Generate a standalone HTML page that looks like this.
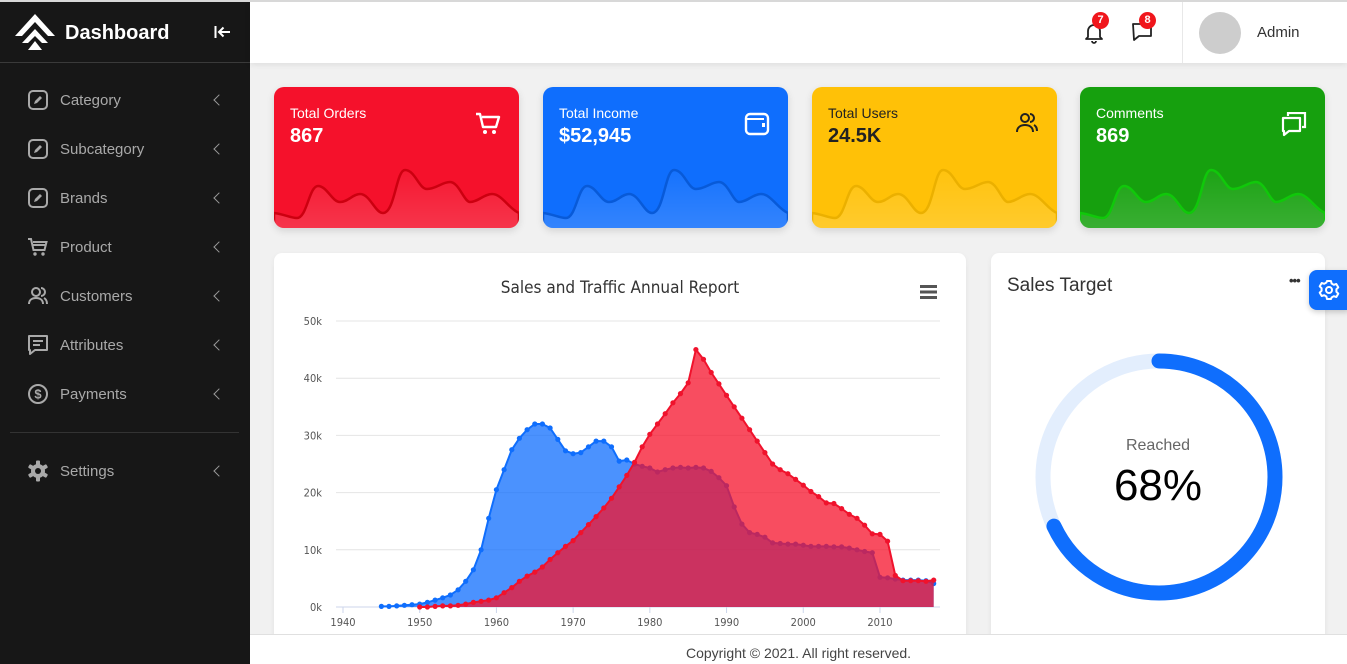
<!DOCTYPE html>
<html><head><meta charset="utf-8"><style>
*{box-sizing:border-box;margin:0;padding:0}
body{width:1347px;height:664px;overflow:hidden;background:#f1f1f1;font-family:"Liberation Sans",sans-serif;position:relative}
.topline{position:absolute;left:0;top:0;width:1347px;height:2px;background:#d8d8d8;z-index:5}
.side{position:absolute;left:0;top:2px;width:250px;height:662px;background:#171717}
.logo{position:absolute;left:0;top:0;width:250px;height:61px;border-bottom:1px solid #3a3a3a}
.logo .t{position:absolute;left:65px;top:20px;color:#fff;font-size:20px;font-weight:bold}
.item{position:absolute;left:0;width:250px;height:30px;color:#a9a9a9;font-size:15px}
.item svg{position:absolute;left:27px;top:4px}
.item span{position:absolute;left:60px;top:7px}
.item i{position:absolute;left:215px;top:11px;width:8px;height:8px;border-left:1.3px solid #9a9a9a;border-bottom:1.3px solid #9a9a9a;transform:rotate(45deg)}
.hdr{position:absolute;left:250px;top:2px;width:1097px;height:61px;background:#fff;box-shadow:0 2px 6px rgba(0,0,0,.08)}
.badge{position:absolute;width:17px;height:17px;border-radius:50%;background:#f0161c;color:#fff;font-size:11px;font-weight:bold;text-align:center;line-height:17px}
.card{position:absolute;top:87px;width:245px;height:141px;border-radius:10px;overflow:hidden;box-shadow:0 3px 8px rgba(0,0,0,.12)}
.card .l{position:absolute;left:16px;top:18px;font-size:14px}
.card .v{position:absolute;left:16px;top:38px;font-size:20px;font-weight:bold}
.card svg.s{position:absolute;left:0;top:0}
.card svg.ic{position:absolute;right:18px;top:25px}
.panel{position:absolute;background:#fff;border-radius:8px;box-shadow:0 2px 6px rgba(0,0,0,.06)}
.foot{position:absolute;left:250px;top:634px;width:1097px;height:30px;background:#fff;border-top:1px solid #e0e0e0;text-align:center;font-size:14px;color:#444;padding-top:10px;padding-left:0}
</style></head><body>
<div class="topline"></div>
<div class="side">
 <div class="logo">
  <svg style="position:absolute;left:15px;top:11px" width="40" height="38" viewBox="0 0 40 38"><path d="M20 1 L40 23 L33 23 L20 9 L7 23 L0 23Z" fill="#fff"/><path d="M20 16 L33 30 L27 30 L20 23 L13 30 L7 30Z" fill="#fff"/><path d="M20 28 L27 37 L13 37Z" fill="#fff"/></svg>
  <div class="t">Dashboard</div>
  <svg style="position:absolute;left:214px;top:23px" width="18" height="14" viewBox="0 0 18 14"><path d="M1.5 1v12M16 7H5M9.5 2.5L5 7l4.5 4.5" stroke="#fff" stroke-width="2" fill="none"/></svg>
 </div>
 <div class="item" style="top:83px"><svg width="22" height="22" viewBox="0 0 22 22"><rect x="2" y="2" width="18" height="18" rx="4" stroke="#a9a9a9" stroke-width="2" fill="none"/><path d="M7 15l1-3 5-5 2 2-5 5z" fill="#a9a9a9"/></svg><span>Category</span><i></i></div>
 <div class="item" style="top:132px"><svg width="22" height="22" viewBox="0 0 22 22"><rect x="2" y="2" width="18" height="18" rx="4" stroke="#a9a9a9" stroke-width="2" fill="none"/><path d="M7 15l1-3 5-5 2 2-5 5z" fill="#a9a9a9"/></svg><span>Subcategory</span><i></i></div>
 <div class="item" style="top:181px"><svg width="22" height="22" viewBox="0 0 22 22"><rect x="2" y="2" width="18" height="18" rx="4" stroke="#a9a9a9" stroke-width="2" fill="none"/><path d="M7 15l1-3 5-5 2 2-5 5z" fill="#a9a9a9"/></svg><span>Brands</span><i></i></div>
 <div class="item" style="top:230px"><svg width="22" height="22" viewBox="0 0 22 22"><path d="M1 3h3l2.5 11h11l2-8H6" stroke="#a9a9a9" stroke-width="2" fill="none"/><path d="M6 9h13" stroke="#a9a9a9" stroke-width="2"/><circle cx="8" cy="18" r="1.7" fill="#a9a9a9"/><circle cx="16" cy="18" r="1.7" fill="#a9a9a9"/></svg><span>Product</span><i></i></div>
 <div class="item" style="top:279px"><svg width="22" height="22" viewBox="0 0 22 22"><circle cx="9" cy="7" r="4" stroke="#a9a9a9" stroke-width="2" fill="none"/><path d="M2 19c0-4 3-6 7-6s7 2 7 6M14 3a4 4 0 0 1 0 8M17 13c2 1 3 3 3 6" stroke="#a9a9a9" stroke-width="2" fill="none"/></svg><span>Customers</span><i></i></div>
 <div class="item" style="top:328px"><svg width="22" height="22" viewBox="0 0 22 22"><path d="M2 2h18v14H8l-5 4v-4H2z" stroke="#a9a9a9" stroke-width="2" fill="none" stroke-linejoin="round"/><path d="M6 7h10M6 11h7" stroke="#a9a9a9" stroke-width="2"/></svg><span>Attributes</span><i></i></div>
 <div class="item" style="top:377px"><svg width="22" height="22" viewBox="0 0 22 22"><circle cx="11" cy="11" r="9" stroke="#a9a9a9" stroke-width="2" fill="none"/><text x="11" y="15.5" text-anchor="middle" font-size="13" font-weight="bold" fill="#a9a9a9" font-family="Liberation Sans">$</text></svg><span>Payments</span><i></i></div>
 <div style="position:absolute;left:10px;top:430px;width:229px;height:1px;background:#333"></div>
 <div class="item" style="top:454px"><svg width="22" height="22" viewBox="0 0 22 22"><g fill="#a9a9a9"><circle cx="11" cy="11" r="7"/><rect x="9" y="0.5" width="4" height="21" rx="1"/><rect x="9" y="0.5" width="4" height="21" rx="1" transform="rotate(60 11 11)"/><rect x="9" y="0.5" width="4" height="21" rx="1" transform="rotate(120 11 11)"/></g><circle cx="11" cy="11" r="3" fill="#171717"/></svg><span>Settings</span><i></i></div>
</div>

<div class="hdr">
 <svg style="position:absolute;left:834px;top:20px" width="20" height="22" viewBox="0 0 20 22"><path d="M4 15V9a6 6 0 0 1 12 0v6l2 2H2z" stroke="#222" stroke-width="1.8" fill="none" stroke-linejoin="round"/><path d="M8 19a2 2 0 0 0 4 0" stroke="#222" stroke-width="1.8" fill="none"/></svg>
 <div class="badge" style="left:842px;top:10px">7</div>
 <svg style="position:absolute;left:881px;top:20px" width="22" height="20" viewBox="0 0 22 20"><path d="M2 2h18v12H8l-5 4z" stroke="#222" stroke-width="1.8" fill="none" stroke-linejoin="round"/></svg>
 <div class="badge" style="left:889px;top:10px">8</div>
 <div style="position:absolute;left:932px;top:0;width:1px;height:61px;background:#e8e8e8"></div>
 <div style="position:absolute;left:949px;top:10px;width:42px;height:42px;border-radius:50%;background:#cdcdcd"></div>
 <div style="position:absolute;left:1007px;top:22px;font-size:15px;color:#333">Admin</div>
</div>

<svg width="0" height="0" style="position:absolute"><defs><linearGradient id="g1" x1="0" y1="0" x2="0" y2="1"><stop offset="0" stop-color="#fff" stop-opacity=".03"/><stop offset="1" stop-color="#fff" stop-opacity=".16"/></linearGradient></defs></svg>

<div class="card" style="left:274px;background:#f5112b;color:#fff">
 <svg class="s" width="245" height="141"><path d="M0 126 C10 127 16 131 23 131 C33 131 35 99 44 99 C53 99 58 115 66 115 C74 115 79 107 86 107 C96 107 101 126 109 126 C121 126 122 83 131 83 C141 83 145 102 153 102 C162 102 168 95 176 95 C185 95 190 115 196 115 C204 115 210 107 218 107 C228 107 235 122 245 126 L245 145 L0 145Z" fill="url(#g1)" stroke="#cc0010" stroke-width="2.5"/></svg>
 <div class="l">Total Orders</div><div class="v">867</div>
 <svg class="ic" width="26" height="24" viewBox="0 0 26 24"><path d="M1 2h4l3 13h13l3-10H7" stroke="#fff" stroke-width="2.4" fill="none" stroke-linejoin="round"/><circle cx="10" cy="20" r="2" fill="#fff"/><circle cx="19" cy="20" r="2" fill="#fff"/></svg>
</div>
<div class="card" style="left:543px;background:#0f6efd;color:#fff">
 <svg class="s" width="245" height="141"><path d="M0 126 C10 127 16 131 23 131 C33 131 35 99 44 99 C53 99 58 115 66 115 C74 115 79 107 86 107 C96 107 101 126 109 126 C121 126 122 83 131 83 C141 83 145 102 153 102 C162 102 168 95 176 95 C185 95 190 115 196 115 C204 115 210 107 218 107 C228 107 235 122 245 126 L245 145 L0 145Z" fill="url(#g1)" stroke="#085ad8" stroke-width="2.5"/></svg>
 <div class="l">Total Income</div><div class="v">$52,945</div>
 <svg class="ic" width="26" height="24" viewBox="0 0 26 24"><rect x="2" y="2" width="22" height="20" rx="4" stroke="#fff" stroke-width="2.4" fill="none"/><path d="M2 7h18" stroke="#fff" stroke-width="2"/><rect x="18" y="11" width="3" height="4" fill="#fff"/></svg>
</div>
<div class="card" style="left:812px;background:#ffc107;color:#222">
 <svg class="s" width="245" height="141"><path d="M0 126 C10 127 16 131 23 131 C33 131 35 99 44 99 C53 99 58 115 66 115 C74 115 79 107 86 107 C96 107 101 126 109 126 C121 126 122 83 131 83 C141 83 145 102 153 102 C162 102 168 95 176 95 C185 95 190 115 196 115 C204 115 210 107 218 107 C228 107 235 122 245 126 L245 145 L0 145Z" fill="url(#g1)" stroke="#ebb000" stroke-width="2.5"/></svg>
 <div class="l">Total Users</div><div class="v">24.5K</div>
 <svg class="ic" width="24" height="22" viewBox="0 0 24 22"><circle cx="10" cy="6" r="4" stroke="#222" stroke-width="2" fill="none"/><path d="M2 20c0-5 4-7 8-7s8 2 8 7M15 2a4 4 0 0 1 0 8M19 13c2 1 3 3 3 6" stroke="#222" stroke-width="2" fill="none"/></svg>
</div>
<div class="card" style="left:1080px;background:#16a00e;color:#fff">
 <svg class="s" width="245" height="141"><path d="M0 126 C10 127 16 131 23 131 C33 131 35 99 44 99 C53 99 58 115 66 115 C74 115 79 107 86 107 C96 107 101 126 109 126 C121 126 122 83 131 83 C141 83 145 102 153 102 C162 102 168 95 176 95 C185 95 190 115 196 115 C204 115 210 107 218 107 C228 107 235 122 245 126 L245 145 L0 145Z" fill="url(#g1)" stroke="#10c80a" stroke-width="2.5"/></svg>
 <div class="l">Comments</div><div class="v">869</div>
 <svg class="ic" width="26" height="26" viewBox="0 0 26 26"><path d="M7 4V1h17v14h-3" stroke="#fff" stroke-width="2.2" fill="none"/><path d="M2 6h17v13H8l-5 4V19H2z" stroke="#fff" stroke-width="2.2" fill="none" stroke-linejoin="round"/></svg>
</div>

<div class="panel" style="left:274px;top:253px;width:692px;height:400px">
 <svg width="692" height="400" style="position:absolute;left:0;top:0" id="ch"></svg>
</div>
<div class="panel" style="left:991px;top:253px;width:334px;height:400px">
 <div style="position:absolute;left:16px;top:22px;font-size:19px;color:#333">Sales Target</div>
 <div style="position:absolute;left:298px;top:20px;font-size:13px;font-weight:bold;color:#333;letter-spacing:-1px">•••</div>
 <svg width="334" height="400" style="position:absolute;left:0;top:0"><circle cx="168" cy="224" r="116" stroke="#e3eefd" stroke-width="15" fill="none"/><circle cx="168" cy="224" r="116" stroke="#0f6efd" stroke-width="15" fill="none" stroke-linecap="round" stroke-dasharray="495.6 1000" transform="rotate(-90 168 224)"/></svg>
 <div style="position:absolute;left:0;width:334px;top:184px;text-align:center;font-size:16px;color:#666">Reached</div>
 <div style="position:absolute;left:0;width:334px;top:208px;text-align:center;font-size:44px;color:#000">68%</div>
</div>
<div style="position:absolute;left:1309px;top:270px;width:40px;height:40px;background:#0f6efd;border-radius:8px 0 0 8px;box-shadow:0 2px 6px rgba(0,0,0,.2)">
 <svg style="position:absolute;left:9px;top:9px" width="22" height="22" viewBox="0 0 22 22"><g fill="none" stroke="#fff" stroke-width="2"><path d="M9 2h4l.6 2.5 2.2 1.3 2.5-.8 2 3.4-1.9 1.8v2.6l1.9 1.8-2 3.4-2.5-.8-2.2 1.3L13 20H9l-.6-2.5-2.2-1.3-2.5.8-2-3.4 1.9-1.8V9.2L1.7 7.4l2-3.4 2.5.8 2.2-1.3z" stroke-linejoin="round"/><circle cx="11" cy="11" r="3"/></g></svg>
</div>
<div class="foot">Copyright © 2021. All right reserved.</div>

<script>
(function(){
var ox=274, oy=253;
function X(y){return 343+(y-1940)*7.671-ox}
function Y(v){return 607-v*5.72-oy}
var blue=[0.1,0.1,0.2,0.3,0.4,0.5,0.8,1.2,1.6,2.1,3.0,4.5,6.5,10,15.5,20.5,24,27.5,29.5,31,32,32,31.3,29.3,27.3,26.8,27,28,29,29,28,25.5,25.7,25,24.6,24.3,23.6,24,24.3,24.4,24.3,24.4,24.3,23.7,22.6,21.2,17.5,14.5,13,12.7,12.2,11.2,11.1,11,11,10.8,10.6,10.6,10.6,10.5,10.5,10.3,10,9.7,9.5,5.2,5.1,4.9,4.7,4.7,4.7,4.6,4.1];
var red=[0,0,0.1,0.2,0.2,0.3,0.5,0.8,1,1.2,1.6,2.5,3.4,4.5,5.4,6.1,7,8.3,9.5,10.6,11.6,13,14.4,15.8,17.3,19,21,23,25.3,28,30.2,32,33.8,35.7,37.3,39.2,45,43.3,41,39,37,35,33,31,29,27,25,24,23.3,22.3,21.3,20.2,19.3,18.2,18.1,17.2,16.2,15.5,14.3,12.8,12.7,11.5,5.5,4.6,4.6,4.6,4.5,4.7];
var s='';
s+='<text x="346" y="40" text-anchor="middle" font-family="DejaVu Sans Condensed,DejaVu Sans,sans-serif" font-size="17" fill="#333">Sales and Traffic Annual Report</text>';
s+='<g fill="#555"><rect x="646" y="32" width="17" height="3"/><rect x="646" y="37.5" width="17" height="3"/><rect x="646" y="43" width="17" height="3"/></g>';
for(var k=0;k<=5;k++){var y=Y(k*10);s+='<line x1="62" x2="666" y1="'+y+'" y2="'+y+'" stroke="#e4e4e4"/>';s+='<text x="48" y="'+(y+4)+'" text-anchor="end" font-family="DejaVu Sans Condensed,DejaVu Sans,sans-serif" font-size="11" fill="#555">'+k*10+'k</text>';}
s+='<line x1="62" x2="666" y1="'+Y(0)+'" y2="'+Y(0)+'" stroke="#ccd6eb"/>';
for(var yr=1940;yr<=2010;yr+=10){var x=X(yr);s+='<line x1="'+x+'" x2="'+x+'" y1="'+Y(0)+'" y2="'+(Y(0)+6)+'" stroke="#ccd6eb"/><text x="'+x+'" y="'+(Y(0)+19)+'" text-anchor="middle" font-family="DejaVu Sans Condensed,DejaVu Sans,sans-serif" font-size="11" fill="#555">'+yr+'</text>';}
function series(d,start,fill,stroke){var p='',pts=[];for(var i=0;i<d.length;i++){pts.push([X(start+i),Y(d[i])]);}
p='M'+pts[0][0]+' '+Y(0);pts.forEach(function(q){p+=' L'+q[0].toFixed(1)+' '+q[1].toFixed(1)});p+=' L'+pts[pts.length-1][0]+' '+Y(0)+'Z';
var l='M'+pts.map(function(q){return q[0].toFixed(1)+' '+q[1].toFixed(1)}).join(' L');
var o='<path d="'+p+'" fill="'+fill+'"/><path d="'+l+'" fill="none" stroke="'+stroke+'" stroke-width="2"/>';
pts.forEach(function(q){o+='<circle cx="'+q[0].toFixed(1)+'" cy="'+q[1].toFixed(1)+'" r="2.6" fill="'+stroke+'"/>'});return o;}
s+=series(blue,1945,'rgba(15,110,253,0.75)','#0f6efd');
s+=series(red,1950,'rgba(245,17,43,0.75)','#f0122c');
document.getElementById('ch').innerHTML=s;
})();
</script>
</body></html>
